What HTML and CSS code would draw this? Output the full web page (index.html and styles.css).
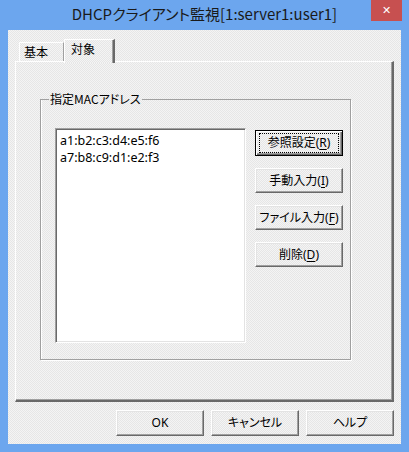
FILE: index.html
```html
<!DOCTYPE html>
<html lang="ja">
<head>
<meta charset="utf-8">
<title>DHCPクライアント監視</title>
<link rel="stylesheet" href="styles.css">
</head>
<body>
<div class="window">
  <div class="titlebar">
    <span class="title">DHCPクライアント監視[1:server1:user1]</span>
    <span class="close">✕</span>
  </div>
  <div class="client">
    <div class="tabs">
      <div class="tab">基本</div>
      <div class="tab active">対象</div>
    </div>
    <div class="panel">
      <fieldset class="group">
        <legend>指定MACアドレス</legend>
        <div class="row">
          <div class="listbox">
            <div class="item">a1:b2:c3:d4:e5:f6</div>
            <div class="item">a7:b8:c9:d1:e2:f3</div>
          </div>
          <div class="side">
            <button class="btn default"><span class="focus">参照設定(<u>R</u>)</span></button>
            <button class="btn">手動入力(<u>I</u>)</button>
            <button class="btn">ファイル入力(<u>F</u>)</button>
            <button class="btn">削除(<u>D</u>)</button>
          </div>
        </div>
      </fieldset>
    </div>
    <div class="actions">
      <button class="btn">OK</button>
      <button class="btn">キャンセル</button>
      <button class="btn">ヘルプ</button>
    </div>
  </div>
</div>
</body>
</html>
```
FILE: styles.css
```css
* { box-sizing: border-box; }
html, body { margin: 0; padding: 0; }
body {
  width: 409px;
  height: 452px;
  overflow: hidden;
  background: #6ca6ee;
  font-family: "Noto Sans CJK JP", sans-serif;
  font-size: 12px;
  font-feature-settings: "palt";
  color: #000;
}
.window {
  width: 409px;
  height: 452px;
  display: flex;
  flex-direction: column;
}
.titlebar {
  height: 30px;
  position: relative;
  display: flex;
  justify-content: center;
  align-items: center;
}
.title {
  font-size: 15px;
  line-height: 18px;
  color: #1a1a1a;
  margin-top: -2px;
}
.close {
  position: absolute;
  top: 0;
  left: 371px;
  width: 31px;
  height: 21px;
  background: #c75050;
  color: #fff;
  font-family: "DejaVu Sans", sans-serif;
  font-weight: bold;
  font-size: 11px;
  display: flex;
  justify-content: center;
  align-items: center;
}
.client {
  flex: 1;
  margin: 0 8px 8px 8px;
  padding: 9px 7px 8px 7px;
  display: flex;
  flex-direction: column;
  background: repeating-conic-gradient(#f4f4f4 0 25%, #e6e6e6 0 50%) 0 0 / 2px 2px;
}
.tabs {
  height: 22px;
  display: flex;
  align-items: flex-end;
  padding-left: 4px;
  position: relative;
  z-index: 1;
}
.tab {
  height: 19px;
  width: 45px;
  padding-left: 4px;
  line-height: 18px;
  border-top: 1px solid #fff;
  border-left: 1px solid #fff;
  border-right: 1px solid #a0a0a0;
  background: repeating-conic-gradient(#f4f4f4 0 25%, #e6e6e6 0 50%) 0 0 / 2px 2px;
}
.tab.active {
  height: 24px;
  width: 51px;
  padding-left: 6px;
  line-height: 18px;
  margin-bottom: -2px;
  border-right: 2px solid #696969;
  box-shadow: inset -1px 0 0 #a0a0a0;
}
.panel {
  flex: 1;
  border-top: 1px solid #fff;
  border-left: 1px solid #fff;
  border-right: 2px solid #696969;
  border-bottom: 2px solid #696969;
  box-shadow: inset -1px -1px 0 #a0a0a0;
  padding: 29px 0 0 24px;
}
.group {
  width: 311px;
  margin: 0;
  padding: 21px 7px 16px 14px;
  border: 1px solid #a0a0a0;
  box-shadow: 1px 1px 0 #fff, inset 1px 0 0 #fff;
}
.group legend {
  margin-left: -6px;
  padding: 0 1px;
  line-height: 16px;
}
.row {
  display: flex;
  gap: 9px;
}
.listbox {
  width: 191px;
  height: 215px;
  background: #fff;
  border-top: 1px solid #a0a0a0;
  border-left: 1px solid #a0a0a0;
  border-right: 1px solid #fff;
  border-bottom: 1px solid #fff;
  box-shadow: inset 1px 1px 0 #696969, inset -1px -1px 0 #e3e3e3;
  padding: 3px 0 0 4px;
  font-family: "Noto Sans", "Noto Sans CJK JP", sans-serif;
  font-size: 12.5px;
  line-height: 17px;
}
.side {
  display: flex;
  flex-direction: column;
  gap: 12px;
  padding-top: 2px;
}
.btn {
  width: 88px;
  height: 25px;
  padding: 0;
  font-family: "Noto Sans", "Noto Sans CJK JP", sans-serif;
  font-size: 12px;
  font-feature-settings: "palt";
  color: #000;
  background: repeating-conic-gradient(#f4f4f4 0 25%, #e6e6e6 0 50%) 0 0 / 2px 2px;
  border-top: 1px solid #fff;
  border-left: 1px solid #fff;
  border-right: 1px solid #696969;
  border-bottom: 1px solid #696969;
  box-shadow: inset -1px -1px 0 #a0a0a0, inset 1px 1px 0 #e3e3e3;
  display: flex;
  justify-content: center;
  align-items: center;
  line-height: 16px;
}
.btn u { text-underline-offset: 2px; }
.btn.default {
  height: 26px;
  border: 1px solid #000;
  box-shadow: inset 1px 1px 0 #fff, inset -1px -1px 0 #696969, inset -2px -2px 0 #a0a0a0;
}
.focus {
  display: flex;
  align-items: center;
  justify-content: center;
  width: 78px;
  height: 18px;
  outline: 1px dotted #000;
}
.actions {
  margin-top: 8px;
  display: flex;
  justify-content: flex-end;
  gap: 7px;
}
.actions .btn { height: 26px; }
```
